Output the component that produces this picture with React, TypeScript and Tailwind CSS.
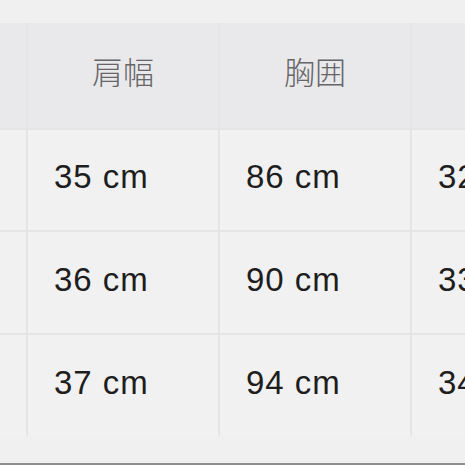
import React from "react";

const rows = [
  ["35 cm", "86 cm", "32 cm"],
  ["36 cm", "90 cm", "33 cm"],
  ["37 cm", "94 cm", "34 cm"],
];

export default function App() {
  return (
    <div className="w-[465px] h-[465px] bg-[#f0f0f0] flex flex-col overflow-hidden">
      <div className="h-[23px] shrink-0" />
      <div className="grid grid-cols-[26px_190px_190px_1fr] grid-rows-[105px_100px_101px_101px] gap-[2px] bg-[#e5e5e6] w-full">
        <div className="bg-[#e9e9eb]" />
        <div className="bg-[#e9e9eb] flex items-center justify-center text-[31px] font-light text-[#666668] pb-[9px]" style={{ fontFamily: '"Noto Sans CJK JP", "Noto Sans CJK SC", sans-serif' }}>
          肩幅
        </div>
        <div className="bg-[#e9e9eb] flex items-center justify-center text-[31px] font-light text-[#666668] pb-[9px]" style={{ fontFamily: '"Noto Sans CJK JP", "Noto Sans CJK SC", sans-serif' }}>
          胸囲
        </div>
        <div className="bg-[#e9e9eb]" />
        {rows.map((r, i) => (
          <React.Fragment key={i}>
            <div className="bg-[#f1f1f1]" />
            {r.map((c, j) => (
              <div
                key={j}
                className="bg-[#f1f1f1] flex items-center pl-[26px] pb-[6px] overflow-hidden whitespace-nowrap text-[33px] tracking-[1px] text-[#1e1e1e] font-['Liberation_Sans',sans-serif]"
              >
                {c}
              </div>
            ))}
          </React.Fragment>
        ))}
      </div>
      <div className="flex-1" />
      <div className="h-[2px] bg-[#8e8e8e] shrink-0" />
    </div>
  );
}
